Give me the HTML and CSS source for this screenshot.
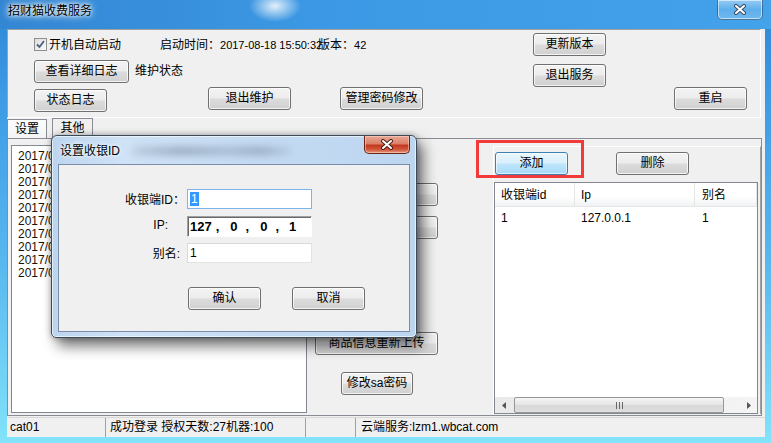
FILE: index.html
```html
<!DOCTYPE html>
<html lang="zh-CN">
<head>
  <meta charset="UTF-8" />
  <meta name="viewport" content="width=device-width, initial-scale=1.0"/>
  <title>招财猫收费服务</title>
  <link rel="stylesheet" href="styles.css">
</head>
<body>
  <div class="window">
    <div class="titlebar">
      <span class="title">招财猫收费服务</span>
      <button class="win-close">
        <svg width="14" height="11" viewBox="0 0 14 11"><path d="M3 2 L11 9 M11 2 L3 9" stroke="#3a4a5c" stroke-width="4" stroke-linecap="round"/><path d="M3 2 L11 9 M11 2 L3 9" stroke="#fff" stroke-width="2" stroke-linecap="round"/></svg>
      </button>
    </div>

    <div class="client">
      <!-- top control panel -->
      <div class="top-panel">
        <div class="row row1">
          <label class="chk">
            <span class="box"><svg width="11" height="11" viewBox="0 0 11 11"><path d="M2 5.5 L4.5 8 L9 2" stroke="#4a5f87" stroke-width="1.8" fill="none"/></svg></span>
            开机自动启动
          </label>
          <span class="start-time">启动时间：<span class="stamp">2017-08-18 15:50:32</span></span>
          <span class="version">版本：<span class="stamp">42</span></span>
          <button class="btn btn-update">更新版本</button>
        </div>
        <div class="row row2">
          <button class="btn btn-log">查看详细日志</button>
          <span class="state">维护状态</span>
          <button class="btn btn-quit">退出服务</button>
        </div>
        <div class="row row3">
          <button class="btn btn-state">状态日志</button>
          <button class="btn btn-maint">退出维护</button>
          <button class="btn btn-pwd">管理密码修改</button>
          <button class="btn btn-restart">重启</button>
        </div>
      </div>

      <div class="tabs">
        <div class="tab active">设置</div>
        <div class="tab">其他</div>
      </div>

      <div class="tab-body">
        <div class="loglist">
          <div>2017/08/18</div>
          <div>2017/08/18</div>
          <div>2017/08/18</div>
          <div>2017/08/18</div>
          <div>2017/08/18</div>
          <div>2017/08/18</div>
          <div>2017/08/18</div>
          <div>2017/08/18</div>
          <div>2017/08/18</div>
          <div>2017/08/18</div>
        </div>

        <div class="mid-col">
          <button class="btn btn-mid first"></button>
          <button class="btn btn-mid"></button>
          <button class="btn btn-mid upload">商品信息重新上传</button>
          <button class="btn btn-sa">修改sa密码</button>
        </div>

        <div class="right-group">
          <div class="rg-buttons">
            <button class="btn btn-add">添加</button>
            <button class="btn btn-del">删除</button>
          </div>
          <div class="listview">
            <div class="lv-head">
              <div class="c1">收银端id</div>
              <div class="c2">Ip</div>
              <div class="c3">别名</div>
            </div>
            <div class="lv-body">
              <div class="lv-row">
                <div class="c1">1</div>
                <div class="c2">127.0.0.1</div>
                <div class="c3">1</div>
              </div>
            </div>
            <div class="hscroll">
              <span class="arrow"><svg width="4" height="7" viewBox="0 0 4 7"><polygon points="4,0 0,3.5 4,7" fill="#555"/></svg></span>
              <span class="track">
                <span class="thumb"><svg width="7" height="7" viewBox="0 0 7 7"><path d="M0.5 0 V7 M3.5 0 V7 M6.5 0 V7" stroke="#666" stroke-width="1"/></svg></span>
              </span>
              <span class="arrow"><svg width="4" height="7" viewBox="0 0 4 7"><polygon points="0,0 4,3.5 0,7" fill="#555"/></svg></span>
            </div>
          </div>
        </div>
      </div>

      <div class="statusbar">
        <div class="seg s1">cat01</div>
        <div class="seg s2">成功登录 授权天数:27机器:100</div>
        <div class="seg s3"></div>
        <div class="seg s4">云端服务:lzm1.wbcat.com</div>
      </div>
    </div>

    <!-- annotation box -->
    <div class="highlight"></div>

    <!-- modal dialog -->
    <div class="dialog">
      <div class="dlg-title">
        <span class="dlg-caption">设置收银ID</span>
        <span class="ghost"></span>
        <button class="dlg-close">
          <svg width="14" height="11" viewBox="0 0 14 11"><path d="M3 2 L11 9 M11 2 L3 9" stroke="#4a2018" stroke-width="4" stroke-linecap="round"/><path d="M3 2 L11 9 M11 2 L3 9" stroke="#fff" stroke-width="2" stroke-linecap="round"/></svg>
        </button>
      </div>
      <div class="dlg-client">
        <div class="form">
          <span class="lbl lbl-id">收银端ID：</span>
          <div class="input focused"><span class="sel">1</span></div>
          <span class="lbl lbl-ip">IP:</span>
          <div class="input ip">
            <span class="oct">127</span><span class="dot d1">,</span>
            <span class="oct o2">0</span><span class="dot d2">,</span>
            <span class="oct o3">0</span><span class="dot d3">,</span>
            <span class="oct o4">1</span>
          </div>
          <span class="lbl lbl-alias">别名:</span>
          <div class="input plain">1</div>
        </div>
        <div class="dlg-buttons">
          <button class="btn btn-ok">确认</button>
          <button class="btn btn-cancel">取消</button>
        </div>
      </div>
    </div>
  </div>
</body>
</html>
```

FILE: styles.css
```css
* {
  box-sizing: border-box;
}
body {
  margin: 0;
  font: 12px/14px "Liberation Sans", "Noto Sans CJK SC", sans-serif;
  color: #000;
}
.window {
  position: relative;
  width: 771px;
  height: 443px;
  padding: 0 6px 6px 7px;
  background: linear-gradient(180deg, #2f86d4 0%, #3f9de6 25%, #59b8ef 60%, #82e3fa 100%);
  overflow: hidden;
}
.titlebar {
  height: 29px;
  display: flex;
  align-items: flex-start;
  margin: 0 -6px 0 -7px;
  padding: 0 7px 0 6px;
  background:
    radial-gradient(ellipse 26px 16px at 275px 6px, rgba(255,255,255,0.85), rgba(255,255,255,0) 100%),
    linear-gradient(90deg, #3386d2 0%, #3c98e4 40%, #42a2ea 100%);
}
.title {
  margin-top: 4px;
  line-height: 14px;
  padding: 0 2px;
  text-shadow: 0 0 6px #fff, 0 0 10px rgba(255,255,255,0.9), 0 0 3px #fff;
}
.win-close {
  margin-left: auto;
  margin-right: 1px;
  width: 46px;
  height: 20px;
  padding: 0;
  display: flex;
  align-items: center;
  justify-content: center;
  border: 1px solid rgba(30,60,100,0.6);
  border-top: none;
  border-radius: 0 0 5px 5px;
  background: linear-gradient(rgba(255,255,255,0.45), rgba(255,255,255,0.15) 50%, rgba(255,255,255,0.25));
  box-shadow: inset 0 0 0 1px rgba(255,255,255,0.55);
}

.client {
  height: 408px;
  background: #f0f0f0;
}

/* buttons */
.btn {
  height: 23px;
  padding: 0;
  border: 1px solid #707070;
  border-radius: 3px;
  background: linear-gradient(#f3f3f3 0%, #ececec 48%, #dcdcdc 52%, #d0d0d0 100%);
  box-shadow: inset 0 0 0 1px rgba(255,255,255,0.75);
  font: inherit;
  line-height: 21px;
  color: #000;
  flex: none;
}
.btn-add {
  border-color: #3c7fb1;
  background: linear-gradient(#eaf6fd 0%, #d9f0fc 48%, #bee6fd 52%, #a7d9f5 100%);
  box-shadow: inset 0 0 0 1px rgba(255,255,255,0.6);
}

/* top panel */
.top-panel {
  height: 89px;
  width: 754px;
  padding: 3px 0 3px 26px;
  border: 1px solid;
  border-color: #a0a0a0 #fff #fff #a0a0a0;
}
.row {
  display: flex;
  align-items: flex-start;
}
.row1 {
  height: 23px;
  align-items: center;
}
.chk {
  display: flex;
  align-items: center;
  gap: 2px;
  width: 87px;
}
.box {
  width: 13px;
  height: 13px;
  border: 1px solid #8e8f8f;
  background: linear-gradient(135deg, #dcdcdc, #fafafa);
  display: flex;
  align-items: center;
  justify-content: center;
}
.start-time {
  margin-left: 39px;
  width: 158px;
  white-space: nowrap;
}
.stamp {
  font-size: 11px;
}
.version {
  width: 60px;
  white-space: nowrap;
}
.btn-update {
  margin-left: 155px;
  width: 73px;
}
.row2 {
  margin-top: 4px;
}
.btn-log {
  width: 95px;
}
.state {
  margin-left: 6px;
  width: 48px;
  line-height: 23px;
}
.btn-quit {
  margin-left: 350px;
  margin-top: 4px;
  width: 73px;
}
.btn-state {
  margin-top: 2px;
  width: 73px;
}
.btn-maint {
  margin-left: 101px;
  width: 83px;
}
.btn-pwd {
  margin-left: 49px;
  width: 83px;
}
.btn-restart {
  margin-left: 251px;
  width: 73px;
}

/* tabs */
.tabs {
  height: 20px;
  display: flex;
  align-items: flex-end;
}
.tab {
  height: 20px;
  width: 41px;
  margin-left: 5px;
  border: 1px solid #898c95;
  border-bottom: none;
  text-align: center;
  line-height: 19px;
  background: #f0f0f0;
}
.tab.active {
  margin-left: 0;
  width: 40px;
  height: 19px;
  background: linear-gradient(#fdfdfd, #f4f4f4);
}

.tab-body {
  height: 278px;
  width: 755px;
  border: 1px solid #898c95;
  display: flex;
  align-items: flex-start;
  padding: 6px 0 0 3px;
}
.loglist {
  width: 296px;
  height: 268px;
  border: 1px solid #828790;
  background: #fff;
  padding: 4px 0 0 6px;
  overflow: hidden;
  white-space: nowrap;
  color: #1a1208;
}
.loglist div {
  line-height: 13px;
}
.mid-col {
  margin-left: 8px;
  width: 123px;
  display: flex;
  flex-direction: column;
}
.btn-mid {
  width: 123px;
  margin-top: 10px;
}
.btn-mid.first {
  margin-top: 38px;
}
.btn-mid.upload {
  margin-top: 93px;
}
.btn-sa {
  width: 72px;
  margin-left: 26px;
  margin-top: 17px;
}

.right-group {
  margin-left: 55px;
  margin-top: 1px;
  width: 268px;
  height: 268px;
  border-top: 1px solid #fff;
  border-left: 1px solid #fff;
  border-right: 1px solid #a0a0a0;
  display: flex;
  flex-direction: column;
}
.rg-buttons {
  display: flex;
  padding: 5px 0 0 1px;
}
.btn-add,
.btn-del {
  width: 73px;
}
.btn-del {
  margin-left: 48px;
}
.listview {
  margin-top: 7px;
  width: 264px;
  height: 232px;
  border: 1px solid #828790;
  background: #fff;
  display: flex;
  flex-direction: column;
}
.lv-head,
.lv-row {
  display: flex;
}
.lv-head {
  height: 24px;
  line-height: 24px;
  background: linear-gradient(#fff 0%, #fff 60%, #f1f2f4 100%);
  border-bottom: 1px solid #e5e5e5;
}
.lv-head > div {
  border-right: 1px solid #e5e5e5;
}
.c1 {
  width: 80px;
  padding-left: 6px;
}
.c2 {
  width: 120px;
  padding-left: 6px;
}
.c3 {
  flex: 1;
  padding-left: 7px;
}
.lv-body {
  flex: 1;
  padding-top: 3px;
}
.lv-row {
  line-height: 17px;
}
.hscroll {
  height: 16px;
  display: flex;
  background: linear-gradient(90deg, #eaeaea, #f4f4f4);
}
.arrow {
  width: 17px;
  display: flex;
  align-items: center;
  justify-content: center;
}
.track {
  flex: 1;
  display: flex;
  padding: 0 15px 0 2px;
}
.thumb {
  width: 210px;
  height: 16px;
  border: 1px solid #979797;
  border-radius: 2px;
  background: linear-gradient(#f6f6f6, #e4e4e4 50%, #d8d8d8 51%, #dedede);
  display: flex;
  align-items: center;
  justify-content: center;
}

/* status bar */
.statusbar {
  margin-top: 1px;
  height: 20px;
  display: flex;
  border-top: 1px solid #d8d8d8;
}
.seg {
  line-height: 19px;
  padding-left: 3px;
  border-right: 1px solid #a0a0a0;
  white-space: nowrap;
}
.s1 { width: 99px; }
.s2 { width: 200px; padding-left: 4px; }
.s3 { width: 50px; }
.s4 { flex: 1; border-right: none; padding-left: 5px; }

/* red annotation */
.highlight {
  position: absolute;
  left: 476px;
  top: 140px;
  width: 108px;
  height: 38px;
  border: 3px solid #f23a3a;
}

/* dialog */
.dialog {
  position: absolute;
  left: 51px;
  top: 135px;
  width: 366px;
  height: 203px;
  border: 1px solid #3e4a58;
  border-radius: 6px 6px 5px 5px;
  padding: 0 6px 5px 6px;
  background: linear-gradient(90deg, #bcd5ef 0%, #cfe2f6 20%, #c3daf2 60%, #bdd6f0 100%);
  box-shadow: inset 0 0 0 1px rgba(255,255,255,0.6), 6px 8px 14px rgba(0,0,0,0.55), 0 0 6px rgba(0,0,0,0.3);
}
.dlg-title {
  height: 28px;
  display: flex;
  align-items: flex-start;
}
.dlg-caption {
  margin-top: 8px;
  margin-left: 2px;
  white-space: nowrap;
  text-shadow: 0 0 6px #fff, 0 0 3px #fff;
}
/* blurred background seen through the glass frame */
.ghost {
  margin-top: 10px;
  margin-left: 12px;
  width: 160px;
  height: 10px;
  border-radius: 5px;
  background: linear-gradient(90deg, rgba(60,70,90,0.1), rgba(60,70,90,0.28) 30%, rgba(60,70,90,0.18) 60%, rgba(60,70,90,0.25) 80%, rgba(60,70,90,0.05));
  filter: blur(3px);
}
.dlg-close {
  margin-left: auto;
  margin-right: 0;
  width: 46px;
  height: 18px;
  padding: 0;
  display: flex;
  align-items: center;
  justify-content: center;
  border: 1px solid #6a2418;
  border-top: none;
  border-radius: 0 0 5px 5px;
  background: linear-gradient(#e8a796 0%, #dc8068 45%, #c2391f 55%, #d2583d 80%, #e59a82 100%);
  box-shadow: inset 0 0 0 1px rgba(255,220,200,0.5);
}
.dlg-client {
  height: 168px;
  background: #f0f0f0;
  border: 1px solid #7a8ea8;
}
.form {
  display: grid;
  grid-template-columns: 128px 125px;
  grid-auto-rows: 21px;
  row-gap: 6px;
  padding-top: 24px;
}
.lbl {
  justify-self: end;
  align-self: center;
  white-space: nowrap;
}
.lbl-id { padding-right: 2px; }
.lbl-ip { padding-right: 19px; margin-top: -4px; }
.lbl-alias { padding-right: 7px; }
.input {
  height: 21px;
  background: #fff;
  border: 1px solid #abadb3;
  padding-left: 2px;
  display: flex;
  align-items: center;
}
.input.focused {
  border-color: #7eb4ea;
  height: 20px;
}
.sel {
  background: #3399ff;
  color: #fff;
  line-height: 14px;
  padding: 0 1px;
}
.input.plain {
  border-color: #dadada #e3e3e3 #e3e3e3 #dadada;
  height: 20px;
}
.input.ip {
  border-color: #a0a0a0 #fff #fff #a0a0a0;
  box-shadow: inset 1px 1px 0 #696969;
  font-weight: bold;
  font-size: 13px;
  padding-left: 2px;
}
.dot { margin-left: 4px; }
.o2 { margin-left: 11px; }
.d2 { margin-left: 8px; }
.o3 { margin-left: 11px; }
.d3 { margin-left: 8px; }
.o4 { margin-left: 10px; }
.dlg-buttons {
  display: flex;
  margin-top: 23px;
  padding-left: 129px;
}
.btn-ok,
.btn-cancel {
  width: 73px;
}
.btn-cancel {
  margin-left: 31px;
}
```
